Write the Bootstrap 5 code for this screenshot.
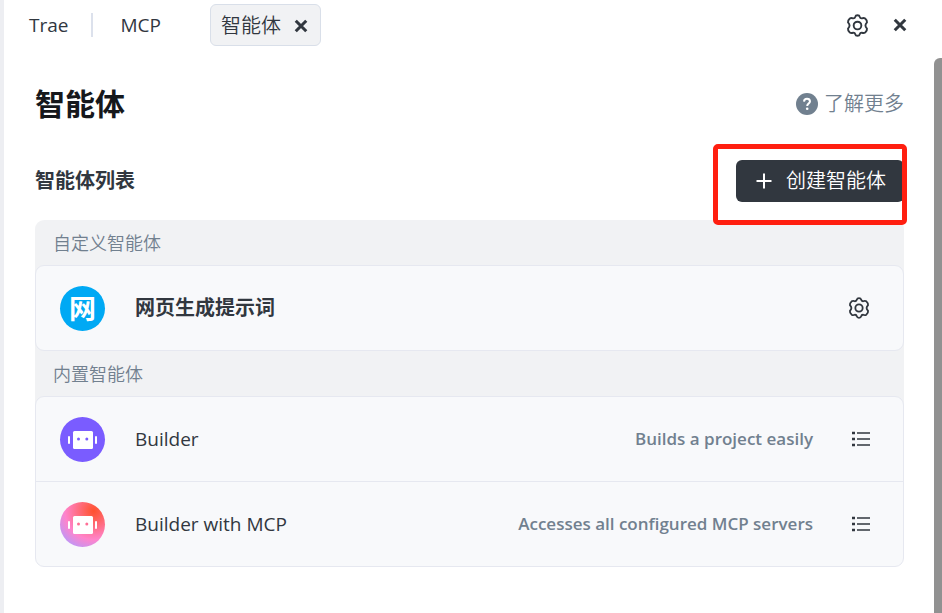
<!DOCTYPE html>
<html lang="zh-CN">
<head>
<meta charset="utf-8">
<meta name="viewport" content="width=device-width, initial-scale=1">
<title>智能体</title>
<link href="https://cdn.jsdelivr.net/npm/bootstrap@5.3.0/dist/css/bootstrap.min.css" rel="stylesheet">
<style>
  :root { --ink: #31373f; --muted-ink: #71808f; --line: #e6e8f0; --strip: #f1f2f4; --panel: #f8f9fb; }
  body { font-family: "Open Sans", "Noto Sans CJK SC", sans-serif; font-size: 19px; line-height: 24px; color: var(--ink); background: #fff; }
  .app-shell { border-left: 4px solid #edeef2; }
  .top-bar { height: 58px; padding: 4px 35px 12px 25px; }
  .top-link { color: var(--ink); font-size: 19px; font-weight: 500; }
  .top-divider { width: 2px; height: 24px; background: #dce1ec; margin: 0 27px 0 23px; }
  .tab-chip { height: 42px; margin-left: 49px; padding: 2px 12px 0 10px; gap: 13px; border: 1px solid #d9dfe9; border-radius: 6px; background: var(--strip); }
  .cjk { font-size: 20px; font-weight: 350; }
  .icon-btn { padding: 0; border: 0; line-height: 0; color: var(--ink); background: none; }
  svg { display: block; flex: none; }
  .page-body { padding: 28px 30px 40px 31px; }
  .page-title { font-size: 30px; line-height: 36px; font-weight: 700; color: #16181c; }
  .help-link { color: var(--muted-ink); gap: 6px; }
  .list-title { font-size: 20px; line-height: 24px; font-weight: 700; }
  .list-head { margin: 38px 0 18px; }
  .create-wrap { position: relative; }
  .create-btn { height: 42px; padding: 0 18px; gap: 12px; border: 0; border-radius: 6px; color: #fff; background: #31373f; }
  .marker { position: absolute; inset: -16px -3px -23px -23px; border: 5px solid #ff1f10; border-radius: 5px; pointer-events: none; }
  .agents { background: linear-gradient(var(--strip), var(--strip)) top / 100% calc(100% - 20px) no-repeat; border-radius: 9px; }
  .group-name { height: 45px; padding: 0 18px; font-size: 18px; font-weight: 350; color: var(--muted-ink); }
  .agent-group { border: 1px solid var(--line); border-radius: 9px; background: var(--panel); }
  .agent-row { height: 84px; padding: 0 33px 0 24px; }
  .agent-row + .agent-row { height: 85px; border-top: 1px solid var(--line); }
  .avatar { width: 45px; height: 45px; margin-right: 30px; border-radius: 50%; flex: none; }
  .avatar-text { background: #00a9f4; color: #fff; font-size: 27px; line-height: 27px; font-weight: 700; }
  .avatar-violet { background: #7a5cff; color: #7a5cff; }
  .avatar-sunset { background: radial-gradient(circle at 75% 20%, #ff5130 0, #ff5a45 10%, #ff84cb 58%, #b29aff 88%); color: #ff6f96; }
  .agent-name { font-weight: 500; }
  .agent-note { font-size: 17px; font-weight: 600; color: var(--muted-ink); margin-right: 39px; }
  .scroll-thumb { width: 8px; border-radius: 6px 0 0 0; background: #919191; flex: none; }
</style>
</head>
<body>
<svg class="d-none" aria-hidden="true">
  <symbol id="gear" viewBox="0 0 24 24"><g fill="none" stroke="currentColor" stroke-width="2" stroke-linejoin="round"><path d="M9.7 2.8Q10 1.3 12 1.3T14.3 2.8Q14.8 4.7 16.5 4.6Q18.5 3.7 20 4.7Q22.2 6.7 21.9 8.8Q20.3 10.5 20.3 12T21.9 15.2Q22.2 17.3 20 19.3Q18.5 20.3 16.5 19.4Q14.8 19.3 14.3 21.2Q14 22.7 12 22.7T9.7 21.2Q9.2 19.3 7.5 19.4Q5.5 20.3 4 19.3Q1.8 17.3 2.1 15.2Q3.7 13.5 3.7 12T2.1 8.8Q1.8 6.7 4 4.7Q5.5 3.7 7.5 4.6Q9.2 4.7 9.7 2.8Z"/><circle cx="12" cy="12" r="4"/></g></symbol>
  <symbol id="cross" viewBox="0 0 12 12"><path d="M1.500 1.500l9 9M10.500 1.500l-9 9" stroke="currentColor" stroke-width="2.600"/></symbol>
  <symbol id="bot" viewBox="0 0 45 45"><g fill="#fff"><rect x="13" y="14" width="20" height="18" rx="1.5"/><rect x="8" y="19" width="2" height="8" rx="1"/><rect x="35" y="19" width="2" height="8" rx="1"/></g><g fill="currentColor"><circle cx="18.5" cy="22" r="1.5"/><circle cx="26.8" cy="22" r="1.5"/></g></symbol>
  <symbol id="bullets" viewBox="0 0 18 16"><path d="M5 2h13M5 8h13M5 14h13" stroke="currentColor" stroke-width="1.700"/><path d="M0 2h3M0 8h3M0 14h3" stroke="currentColor" stroke-width="2.500"/></symbol>
</svg>
<div class="app-shell d-flex flex-column min-vh-100">
  <header class="top-bar d-flex align-items-center">
    <a href="#" class="top-link text-decoration-none">Trae</a>
    <span class="top-divider"></span>
    <a href="#" class="top-link text-decoration-none">MCP</a>
    <div class="tab-chip d-flex align-items-center">
      <span class="cjk">智能体</span>
      <button type="button" class="icon-btn" aria-label="关闭标签"><svg width="14" height="14"><use href="#cross"/></svg></button>
    </div>
    <div class="ms-auto d-flex align-items-center gap-4">
      <button type="button" class="icon-btn" aria-label="设置"><svg width="23" height="23"><use href="#gear"/></svg></button>
      <button type="button" class="icon-btn" aria-label="关闭"><svg width="14" height="14"><use href="#cross"/></svg></button>
    </div>
  </header>
  <div class="d-flex flex-grow-1">
    <main class="page-body flex-grow-1">
      <div class="d-flex justify-content-between align-items-center">
        <h1 class="page-title mb-0">智能体</h1>
        <a href="#" class="help-link d-flex align-items-center text-decoration-none">
          <svg width="22" height="22" viewBox="0 0 22 22"><circle cx="11" cy="11" r="11" fill="currentColor"/><path d="M8 8.600Q8.200 5.800 11 5.800T14 8.300Q14 9.600 12.500 10.600Q11.200 11.500 11.200 13" fill="none" stroke="#fff" stroke-width="2"/><circle cx="11.200" cy="15.700" r="1.300" fill="#fff"/></svg>
          <span class="cjk">了解更多</span>
        </a>
      </div>
      <div class="list-head d-flex justify-content-between align-items-center">
        <h2 class="list-title mb-0">智能体列表</h2>
        <div class="create-wrap">
          <button type="button" class="create-btn d-flex align-items-center">
            <svg width="20" height="20" viewBox="0 0 20 20"><path d="M10 2.500v15M2.500 10h15" stroke="currentColor" stroke-width="2"/></svg>
            <span class="cjk">创建智能体</span>
          </button>
          <span class="marker"></span>
        </div>
      </div>
      <section class="agents">
        <div class="group-name d-flex align-items-center">自定义智能体</div>
        <div class="agent-group">
          <div class="agent-row d-flex align-items-center">
            <span class="avatar avatar-text d-flex align-items-center justify-content-center">网</span>
            <span class="list-title">网页生成提示词</span>
            <button type="button" class="icon-btn ms-auto" aria-label="设置"><svg width="22" height="22"><use href="#gear"/></svg></button>
          </div>
        </div>
        <div class="group-name d-flex align-items-center">内置智能体</div>
        <div class="agent-group">
          <div class="agent-row d-flex align-items-center">
            <svg class="avatar avatar-violet"><use href="#bot"/></svg>
            <span class="agent-name">Builder</span>
            <span class="agent-note ms-auto">Builds a project easily</span>
            <button type="button" class="icon-btn" aria-label="详情"><svg width="18" height="16"><use href="#bullets"/></svg></button>
          </div>
          <div class="agent-row d-flex align-items-center">
            <svg class="avatar avatar-sunset"><use href="#bot"/></svg>
            <span class="agent-name">Builder with MCP</span>
            <span class="agent-note ms-auto">Accesses all configured MCP servers</span>
            <button type="button" class="icon-btn" aria-label="详情"><svg width="18" height="16"><use href="#bullets"/></svg></button>
          </div>
        </div>
      </section>
    </main>
    <div class="scroll-thumb"></div>
  </div>
</div>
<script src="https://cdn.jsdelivr.net/npm/bootstrap@5.3.0/dist/js/bootstrap.bundle.min.js"></script>
</body>
</html>
